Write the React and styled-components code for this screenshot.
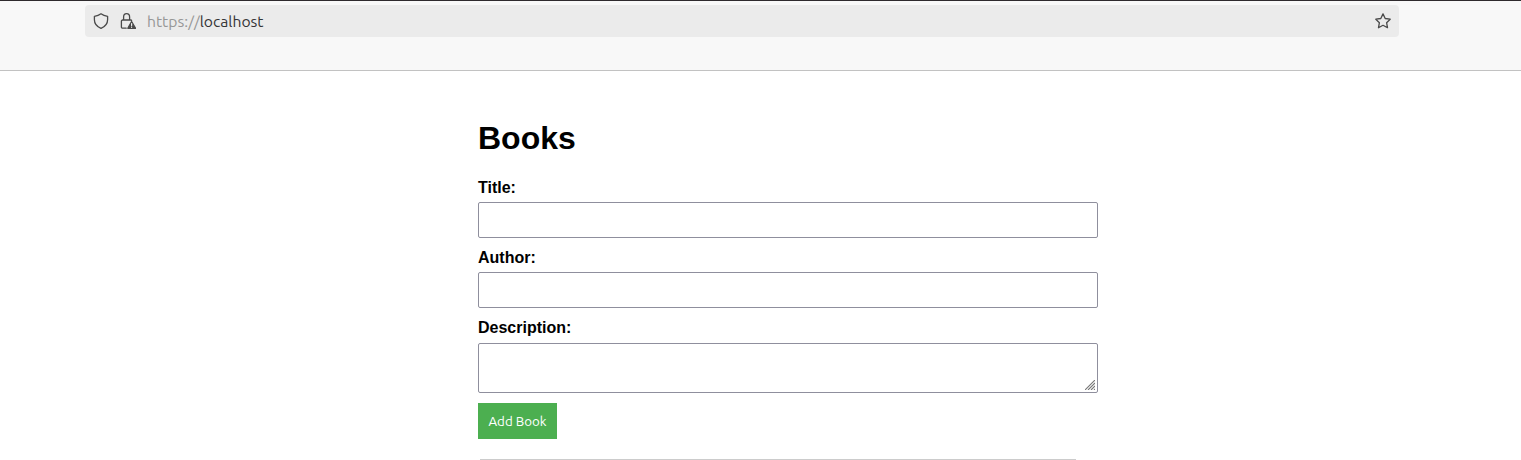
import React from 'react';
import styled, { createGlobalStyle } from 'styled-components';

const GlobalStyle = createGlobalStyle`
  * { box-sizing: border-box; }
  body {
    margin: 0;
    background: #fff;
    color: #000;
    font-family: "Liberation Sans", Arial, sans-serif;
    overflow: hidden;
  }
`;

const Page = styled.div`
  height: 460px;
  overflow: hidden;
`;

const BrowserBar = styled.header`
  height: 71px;
  padding: 4px 122px 0 85px;
  background: #f8f8f8;
  border-top: 1px solid #2e2a2d;
  border-bottom: 1px solid #c2c2c2;
`;

const AddressBar = styled.div`
  display: flex;
  align-items: center;
  height: 32px;
  padding: 0 8px;
  border-radius: 4px;
  background: #ebebeb;
  color: #4a4a4a;
`;

const Icon = styled.svg`
  flex: none;
  width: 16px;
  height: 16px;
  margin-right: ${(p) => p.$gap || 0}px;
  fill: none;
  stroke: currentColor;
  stroke-width: 1.3;
  stroke-linejoin: round;
  stroke-linecap: round;
`;

const Url = styled.div`
  flex: 1;
  font: 15.7px/20px Ubuntu, "Noto Sans", sans-serif;
  color: #363537;
`;

const Scheme = styled.span`
  color: #979797;
`;

const Main = styled.main`
  width: 620px;
  margin-left: 478px;
  padding-top: 49px;
`;

const Heading = styled.h1`
  margin: 0 0 22px;
  font-size: 32px;
  line-height: 37px;
`;

const Form = styled.form`
  display: flex;
  flex-direction: column;
  align-items: flex-start;
`;

const Label = styled.label`
  margin-bottom: ${(p) => p.$gap || 5}px;
  font-size: 16px;
  line-height: 18px;
  font-weight: bold;
`;

const Input = styled.input`
  width: 100%;
  height: 36px;
  margin: 0 0 11px;
  padding: 8px;
  border: 1px solid #8f8f9d;
  border-radius: 2px;
  background: #fff;
`;

const TextFrame = styled.div`
  position: relative;
  width: 100%;
  height: 50px;
  margin-bottom: 10px;
`;

const TextArea = styled.textarea`
  display: block;
  width: 100%;
  height: 100%;
  padding: 8px;
  border: 1px solid #8f8f9d;
  border-radius: 2px;
  background: #fff;
  resize: none;
`;

const Grip = styled.svg`
  position: absolute;
  right: 3px;
  bottom: 3px;
  width: 10px;
  height: 10px;
  fill: none;
  stroke: #777;
  stroke-width: 1.1;
`;

const Button = styled.button`
  width: 79px;
  height: 36px;
  padding: 2px 0 0;
  border: 0;
  background: #4caf50;
  color: #fff;
  font: 13.333px/18px Ubuntu, "Noto Sans", sans-serif;
  white-space: nowrap;
`;

const Divider = styled.hr`
  width: 596px;
  height: 1px;
  margin: 20px 0 0 2px;
  border: 0;
  background: #ccc;
`;

const ShieldIcon = () => (
  <Icon viewBox="0 0 16 16" $gap={11}>
    <path d="M8 .8c1.900 1.500 4 2.200 6.600 2.500v3.400c0 3.500-2.100 6.700-6.600 8.700-4.500-2-6.600-5.200-6.600-8.700V3.300C4 3 6.100 2.300 8 .8z" />
  </Icon>
);

const LockWarningIcon = () => (
  <Icon viewBox="0 0 16 16" $gap={11}>
    <path d="M3.600 7V4a3 3.300 0 0 1 6 0V7M6.200 15.200H2.600a1.200 1.200 0 0 1-1.200-1.200V8.200A1.200 1.200 0 0 1 2.600 7h8q.8 0 1 .4" />
    <path d="M11.600 8.500 7.800 15.300H15.500z" fill="currentColor" />
    <path d="M11.600 10.500v2.100M11.600 14.200v.1" stroke="#ebebeb" strokeWidth="1.200" />
  </Icon>
);

const StarIcon = () => (
  <Icon viewBox="0 0 16 16">
    <path d="M8 .9 10.200 5.500l5 .7-3.600 3.500.9 5L8 12.300l-4.500 2.400.9-5L.8 6.200l5-.7z" />
  </Icon>
);

export default function App() {
  return (
    <Page>
      <GlobalStyle />
      <BrowserBar>
        <AddressBar>
          <ShieldIcon />
          <LockWarningIcon />
          <Url><Scheme>https://</Scheme>localhost</Url>
          <StarIcon />
        </AddressBar>
      </BrowserBar>
      <Main>
        <Heading>Books</Heading>
        <Form onSubmit={(e) => e.preventDefault()}>
          <Label htmlFor="title">Title:</Label>
          <Input id="title" />
          <Label htmlFor="author">Author:</Label>
          <Input id="author" />
          <Label htmlFor="description" $gap={6}>Description:</Label>
          <TextFrame>
            <TextArea id="description" />
            <Grip viewBox="0 0 10 10">
              <path d="M0 10 10 0M3 10l7-7M6 10l4-4M9 10l1-1" />
            </Grip>
          </TextFrame>
          <Button type="submit">Add Book</Button>
        </Form>
        <Divider />
      </Main>
    </Page>
  );
}
